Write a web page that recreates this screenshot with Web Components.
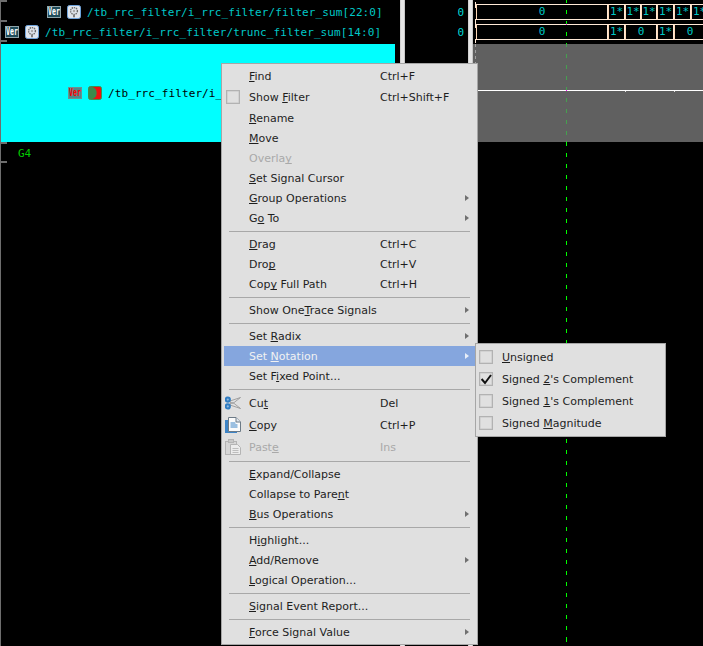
<!DOCTYPE html>
<html>
<head>
<meta charset="utf-8">
<title>Wave view</title>
<style>
  html, body { margin: 0; height: 100%; background: #000; overflow: hidden; }
</style>
</head>
<body>
<wave-view>
  <signal-pane slot="names">
    <signal-row indent="47" kind="ver"><span>/tb_rrc_filter/i_rrc_filter/filter_sum[22:0]</span></signal-row>
    <signal-row indent="5" kind="ver"><span>/tb_rrc_filter/i_rrc_filter/trunc_filter_sum[14:0]</span></signal-row>
    <signal-row indent="68" kind="sel"><span>/tb_rrc_filter/i_</span></signal-row>
    <group-row>G4</group-row>
  </signal-pane>
  <value-pane slot="values">
    <value-row>0</value-row>
    <value-row>0</value-row>
  </value-pane>
  <wave-pane slot="waves">
    <bus-wave values="0:132,1*:17,1*:16,1*:16,1*:17,1*:17,1*:17"></bus-wave>
    <bus-wave values="0:132,1*:17,0:32,1*:17,0:32"></bus-wave>
    <analog-wave></analog-wave>
  </wave-pane>
</wave-view>

<ctx-menu style="left:221px;top:63px;width:257px">
  <menu-item shortcut="Ctrl+F"><u>F</u>ind</menu-item>
  <menu-item shortcut="Ctrl+Shift+F" tall><check-box slot="icon"></check-box>Show <u>F</u>ilter</menu-item>
  <menu-item><u>R</u>ename</menu-item>
  <menu-item><u>M</u>ove</menu-item>
  <menu-item disabled>Overla<u>y</u></menu-item>
  <menu-item><u>S</u>et Signal Cursor</menu-item>
  <menu-item arrow><u>G</u>roup Operations</menu-item>
  <menu-item arrow>G<u>o</u> To</menu-item>
  <menu-sep></menu-sep>
  <menu-item shortcut="Ctrl+C"><u>D</u>rag</menu-item>
  <menu-item shortcut="Ctrl+V">Dro<u>p</u></menu-item>
  <menu-item shortcut="Ctrl+H">Cop<u>y</u> Full Path</menu-item>
  <menu-sep></menu-sep>
  <menu-item arrow>Show One<u>T</u>race Signals</menu-item>
  <menu-sep></menu-sep>
  <menu-item arrow>Set <u>R</u>adix</menu-item>
  <menu-item arrow active>Set <u>N</u>otation</menu-item>
  <menu-item>Set F<u>i</u>xed Point...</menu-item>
  <menu-sep></menu-sep>
  <menu-item shortcut="Del" tall><cut-icon slot="icon"></cut-icon>Cu<u>t</u></menu-item>
  <menu-item shortcut="Ctrl+P" tall><copy-icon slot="icon"></copy-icon><u>C</u>opy</menu-item>
  <menu-item shortcut="Ins" tall disabled><paste-icon slot="icon"></paste-icon>Past<u>e</u></menu-item>
  <menu-sep></menu-sep>
  <menu-item><u>E</u>xpand/Collapse</menu-item>
  <menu-item>Collapse to Pare<u>n</u>t</menu-item>
  <menu-item arrow><u>B</u>us Operations</menu-item>
  <menu-sep></menu-sep>
  <menu-item>H<u>i</u>ghlight...</menu-item>
  <menu-item arrow><u>A</u>dd/Remove</menu-item>
  <menu-item><u>L</u>ogical Operation...</menu-item>
  <menu-sep></menu-sep>
  <menu-item><u>S</u>ignal Event Report...</menu-item>
  <menu-sep></menu-sep>
  <menu-item arrow><u>F</u>orce Signal Value</menu-item>
</ctx-menu>

<ctx-menu style="left:475px;top:343px;width:191px;--icon-col:24px;--label-col:150px;--icon-pad:0">
  <menu-item tall><check-box slot="icon"></check-box><u>U</u>nsigned</menu-item>
  <menu-item tall><check-box slot="icon" checked></check-box>Signed <u>2</u>'s Complement</menu-item>
  <menu-item tall><check-box slot="icon"></check-box>Signed <u>1</u>'s Complement</menu-item>
  <menu-item tall><check-box slot="icon"></check-box>Signed <u>M</u>agnitude</menu-item>
</ctx-menu>

<script>
const MONO = `"DejaVu Sans Mono", "Liberation Mono", monospace`
const SANS = `"DejaVu Sans", "Liberation Sans", sans-serif`

class WaveView extends HTMLElement {
  constructor() {
    super()
    this.attachShadow({ mode: "open" })
    this.shadowRoot.innerHTML = `
      <style>
        :host {
          display: grid;
          grid-template-columns: 400px 5px 63px 5px 1fr;
          width: 703px;
          height: 646px;
          background: #000;
          font: 11px ${MONO};
        }
        .split {
          background: linear-gradient(90deg, #bdbdbd 0, #e6e6e6 1px, #e6e6e6 4px, #a8a8a8 5px);
        }
      </style>
      <slot name="names"></slot>
      <div class="split"></div>
      <slot name="values"></slot>
      <div class="split"></div>
      <slot name="waves"></slot>
    `
  }
}

class SignalPane extends HTMLElement {
  constructor() {
    super()
    this.attachShadow({ mode: "open" })
    this.shadowRoot.innerHTML = `
      <style>
        :host {
          display: flex;
          flex-direction: column;
          padding: 2px 5px 0 1px;
          min-width: 0;
          background:
            linear-gradient(#6e6e6e, #6e6e6e) 0 0 / 7px 2px no-repeat,
            linear-gradient(#6e6e6e, #6e6e6e) 0 20px / 7px 2px no-repeat,
            linear-gradient(#6e6e6e, #6e6e6e) 0 40px / 7px 2px no-repeat,
            linear-gradient(#6e6e6e, #6e6e6e) 0 142px / 7px 2px no-repeat,
            linear-gradient(#6e6e6e, #6e6e6e) 0 161px / 7px 2px no-repeat,
            linear-gradient(#6e6e6e, #6e6e6e) 0 0 / 1px 100% no-repeat,
            #000;
        }
      </style>
      <slot></slot>
    `
  }
}

class SignalRow extends HTMLElement {
  constructor() {
    super()
    this.attachShadow({ mode: "open" })
    const sel = this.getAttribute("kind") === "sel"
    this.shadowRoot.innerHTML = `
      <style>
        :host {
          display: flex;
          align-items: center;
          height: 20px;
          flex: none;
          color: #00c8c8;
          letter-spacing: 0.1px;
          white-space: nowrap;
          overflow: hidden;
        }
        :host([kind="sel"]) {
          height: 98px;
          margin-top: 2px;
          background: #00ffff;
          color: #000;
        }
        .ver {
          display: flex;
          align-items: center;
          justify-content: center;
          width: 14px;
          height: 12px;
          box-sizing: border-box;
          background: #1f4c5a;
          border: 1px solid #8fa5ab;
          color: #fff;
          flex: none;
          margin-right: 6px;
          overflow: hidden;
        }
        .ver span {
          flex: none;
          font: bold 10px/10px ${MONO};
          letter-spacing: 0;
          transform: scaleX(.66);
        }
        .sel .ver { background: #4f8a8a; border-color: #6f8f8f; color: #ff0000; }
        svg { display: block; flex: none; margin-right: 6px; }
        .wrap { display: flex; align-items: center; }
      </style>
      <div class="wrap ${sel ? "sel" : ""}" style="padding-left:${this.getAttribute("indent") - 1}px">
        <div class="ver"><span>Ver</span></div>
        ${sel ? `
        <svg width="14" height="14" viewBox="0 0 14 14">
          <rect x=".5" y=".5" width="13" height="13" rx="2" fill="#ee1111" stroke="#3f8f4f"/>
          <path d="M1 1h3.5c3.2 1 4.2 3.5 4.2 6s-1 5-4.2 6H1z" fill="#3c8a4c"/>
        </svg>` : `
        <svg width="14" height="14" viewBox="0 0 14 14">
          <rect x=".5" y=".5" width="13" height="13" rx="2" fill="#dfe5ec" stroke="#6ea3dc"/>
          <circle cx="7" cy="6" r="3.4" fill="none" stroke="#6a6a6a" stroke-width="1.4" stroke-dasharray="1.4 .8"/>
          <circle cx="7" cy="6" r="1.2" fill="#a8a8a8"/>
          <path d="M6 10h2v2.2H6z" fill="#808080"/>
        </svg>`}
        <slot></slot>
      </div>
    `
  }
}

class GroupRow extends HTMLElement {
  constructor() {
    super()
    this.attachShadow({ mode: "open" })
    this.shadowRoot.innerHTML = `
      <style>
        :host {
          display: flex;
          align-items: center;
          height: 20px;
          margin-top: 1px;
          padding-left: 17px;
          color: #00cc00;
        }
      </style>
      <slot></slot>
    `
  }
}

class ValuePane extends HTMLElement {
  constructor() {
    super()
    this.attachShadow({ mode: "open" })
    this.shadowRoot.innerHTML = `
      <style>
        :host { display: block; padding-top: 2px; background: #000; }
      </style>
      <slot></slot>
    `
  }
}

class ValueRow extends HTMLElement {
  constructor() {
    super()
    this.attachShadow({ mode: "open" })
    this.shadowRoot.innerHTML = `
      <style>
        :host {
          display: flex;
          align-items: center;
          justify-content: flex-end;
          height: 20px;
          padding-right: 4px;
          color: #00d8d8;
        }
      </style>
      <slot></slot>
    `
  }
}

class WavePane extends HTMLElement {
  constructor() {
    super()
    this.attachShadow({ mode: "open" })
    this.shadowRoot.innerHTML = `
      <style>
        :host {
          display: block;
          position: relative;
          overflow: hidden;
          padding-top: 4px;
          background: #000;
          color: #00c8c8;
        }
        .cursor {
          position: absolute;
          left: 93px;
          top: 0;
          bottom: 4px;
          width: 1px;
          background: repeating-linear-gradient(#00ff00 0, #00ff00 4px, transparent 4px, transparent 11px) 0 -1px;
        }
        .dim {
          position: absolute;
          left: 93px;
          top: 44px;
          height: 98px;
          width: 1px;
          background: #606060 repeating-linear-gradient(#45a04f 0, #45a04f 4px, transparent 4px, transparent 11px) 0 -1px;
        }
        .dot { position: absolute; left: 93px; width: 1px; height: 1px; background: #ff00ff; }
      </style>
      <slot></slot>
      <div class="cursor"></div>
      <div class="dim"></div>
      <div class="dot" style="top:24px"></div>
      <div class="dot" style="top:90px"></div>
    `
  }
}

class BusWave extends HTMLElement {
  constructor() {
    super()
    this.attachShadow({ mode: "open" })
    const segs = this.getAttribute("values").split(",").map((s) => s.split(":"))
    this.shadowRoot.innerHTML = `
      <style>
        :host {
          display: flex;
          height: 16px;
          margin-bottom: 4px;
          padding-left: 3px;
          position: relative;
          white-space: nowrap;
        }
        :host::before {
          content: "";
          position: absolute;
          left: 2px;
          top: -2px;
          width: 1px;
          height: 6px;
          background: #ffe9d6;
        }
        :host::after {
          content: "";
          position: absolute;
          left: 2px;
          top: 15px;
          width: 1px;
          height: 4px;
          background: #ffe9d6;
        }
        .seg {
          flex: none;
          box-sizing: border-box;
          height: 16px;
          border: 1px solid #ffe9d6;
          border-left-color: #ffd9b8;
          display: flex;
          align-items: center;
          justify-content: center;
          line-height: 14px;
        }
        .seg:first-child { border-left: 0; padding-right: 2px; }
      </style>
      ${segs.map(([v, w]) => `<div class="seg" style="width:${w}px">${v}</div>`).join("")}
    `
  }
}

class AnalogWave extends HTMLElement {
  constructor() {
    super()
    this.attachShadow({ mode: "open" })
    this.shadowRoot.innerHTML = `
      <style>
        :host {
          display: flex;
          align-items: center;
          height: 98px;
          background: #606060;
          position: relative;
        }
        :host::before {
          content: "";
          position: absolute;
          left: 2px;
          top: 0;
          width: 1px;
          height: 20px;
          background: repeating-linear-gradient(#a0a0a0 0, #a0a0a0 3px, transparent 3px, transparent 6px);
        }
        .line { flex: 1; height: 1px; background: #fff; margin-top: -5px; }
        i { position: absolute; top: 47px; width: 1px; height: 1px; background: #ddd; }
      </style>
      <div class="line"></div>
      <i style="left:152px"></i>
      <i style="left:201px"></i>
    `
  }
}

class CtxMenu extends HTMLElement {
  constructor() {
    super()
    this.attachShadow({ mode: "open" })
    this.shadowRoot.innerHTML = `
      <style>
        :host {
          display: block;
          position: absolute;
          box-sizing: border-box;
          padding: 2px;
          background: #e0e0e0;
          border: 1px solid #a6a6a6;
          color: #1e1e1e;
          font: 11px ${SANS};
          --icon-col: 25px;
          --label-col: 131px;
          --icon-pad: 1px;
        }
      </style>
      <slot></slot>
    `
  }
}

class MenuItem extends HTMLElement {
  constructor() {
    super()
    this.attachShadow({ mode: "open" })
    const short = this.getAttribute("shortcut") || ""
    const arrow = this.hasAttribute("arrow")
    this.shadowRoot.innerHTML = `
      <style>
        :host {
          display: grid;
          grid-template-columns: var(--icon-col) var(--label-col) 1fr 10px;
          align-items: center;
          height: 20px;
          white-space: nowrap;
          text-decoration-skip-ink: none;
          text-underline-offset: 1px;
        }
        :host([tall]) { height: 22px; }
        :host([active]) { background: #85a6de; color: #f2f2f2; }
        :host([disabled]) { color: #a9a9a9; }
        .icon { display: flex; align-items: center; padding-left: var(--icon-pad); }
        .arrow {
          width: 0;
          height: 0;
          border-left: 4px solid #707070;
          border-top: 3.5px solid transparent;
          border-bottom: 3.5px solid transparent;
        }
        :host([active]) .arrow { border-left-color: #e8eef8; }
      </style>
      <div class="icon"><slot name="icon"></slot></div>
      <div class="label"><slot></slot></div>
      <div class="short">${short}</div>
      ${arrow ? `<div class="arrow"></div>` : ""}
    `
  }
}

class MenuSep extends HTMLElement {
  constructor() {
    super()
    this.attachShadow({ mode: "open" })
    this.shadowRoot.innerHTML = `
      <style>
        :host { display: block; padding: 3px 5px 2px; }
        div { height: 1px; background: #a8a8a8; }
      </style>
      <div></div>
    `
  }
}

class CheckBox extends HTMLElement {
  constructor() {
    super()
    this.attachShadow({ mode: "open" })
    this.shadowRoot.innerHTML = `
      <style>
        :host {
          display: block;
          width: 14px;
          height: 14px;
          margin-left: 1px;
          box-sizing: border-box;
          border: 1px solid #b2b2b2;
          box-shadow: inset 0 0 0 .5px #c4c4c4;
        }
        svg { display: block; }
      </style>
      ${this.hasAttribute("checked") ? `
      <svg width="12" height="12" viewBox="0 0 12 12">
        <path d="M1.6 6 5 10 11 2" fill="none" stroke="#111" stroke-width="2"/>
      </svg>` : ""}
    `
  }
}

class CutIcon extends HTMLElement {
  constructor() {
    super()
    this.attachShadow({ mode: "open" })
    this.shadowRoot.innerHTML = `
      <style>:host { display: block; width: 16px; height: 16px; } svg { display: block; }</style>
      <svg width="16" height="16" viewBox="0 0 16 16">
        <path d="M5 6 15.5 2.5 8 8.4 5 7.2zM5 10 15.5 13.5 8 7.6 5 8.8z" stroke="#929292" stroke-width=".8" fill="#e0e0e0"/>
        <circle cx="2.8" cy="4.6" r="2.1" fill="#8fb8dd" stroke="#2f7cc2" stroke-width="2"/>
        <circle cx="2.8" cy="11.4" r="2.1" fill="#8fb8dd" stroke="#2f7cc2" stroke-width="2"/>
      </svg>
    `
  }
}

class CopyIcon extends HTMLElement {
  constructor() {
    super()
    this.attachShadow({ mode: "open" })
    this.shadowRoot.innerHTML = `
      <style>:host { display: block; width: 16px; height: 16px; } svg { display: block; }</style>
      <svg width="16" height="16" viewBox="0 0 16 16">
        <path d="M0 3h4v11h8v2H0z" fill="#3d84c6"/>
        <path d="M3.5.5h7.5l4.5 4.5v9.5h-12z" fill="#fbfbfb" stroke="#6c7a86"/>
        <path d="M11 .5V5h4.5" fill="#dfe6ee" stroke="#6c7a86"/>
        <path d="M5.5 6h5M5.5 8h7M5.5 10h7" stroke="#3d84c6"/>
      </svg>
    `
  }
}

class PasteIcon extends HTMLElement {
  constructor() {
    super()
    this.attachShadow({ mode: "open" })
    this.shadowRoot.innerHTML = `
      <style>:host { display: block; width: 16px; height: 16px; } svg { display: block; }</style>
      <svg width="16" height="16" viewBox="0 0 16 16">
        <rect x=".5" y="2.5" width="11" height="13" fill="#d6d6d6" stroke="#b4b4b4"/>
        <rect x="3.5" y=".5" width="5" height="3" fill="#c8c8c8" stroke="#b4b4b4"/>
        <path d="M5.5 5.5h7l3 3v7h-10z" fill="#ececec" stroke="#b4b4b4"/>
        <path d="M7.5 9.5h6M7.5 11.5h6M7.5 13.5h6" stroke="#bdbdbd"/>
      </svg>
    `
  }
}

customElements.define("wave-view", WaveView)
customElements.define("signal-pane", SignalPane)
customElements.define("signal-row", SignalRow)
customElements.define("group-row", GroupRow)
customElements.define("value-pane", ValuePane)
customElements.define("value-row", ValueRow)
customElements.define("wave-pane", WavePane)
customElements.define("bus-wave", BusWave)
customElements.define("analog-wave", AnalogWave)
customElements.define("ctx-menu", CtxMenu)
customElements.define("menu-item", MenuItem)
customElements.define("menu-sep", MenuSep)
customElements.define("check-box", CheckBox)
customElements.define("cut-icon", CutIcon)
customElements.define("copy-icon", CopyIcon)
customElements.define("paste-icon", PasteIcon)
</script>
</body>
</html>
